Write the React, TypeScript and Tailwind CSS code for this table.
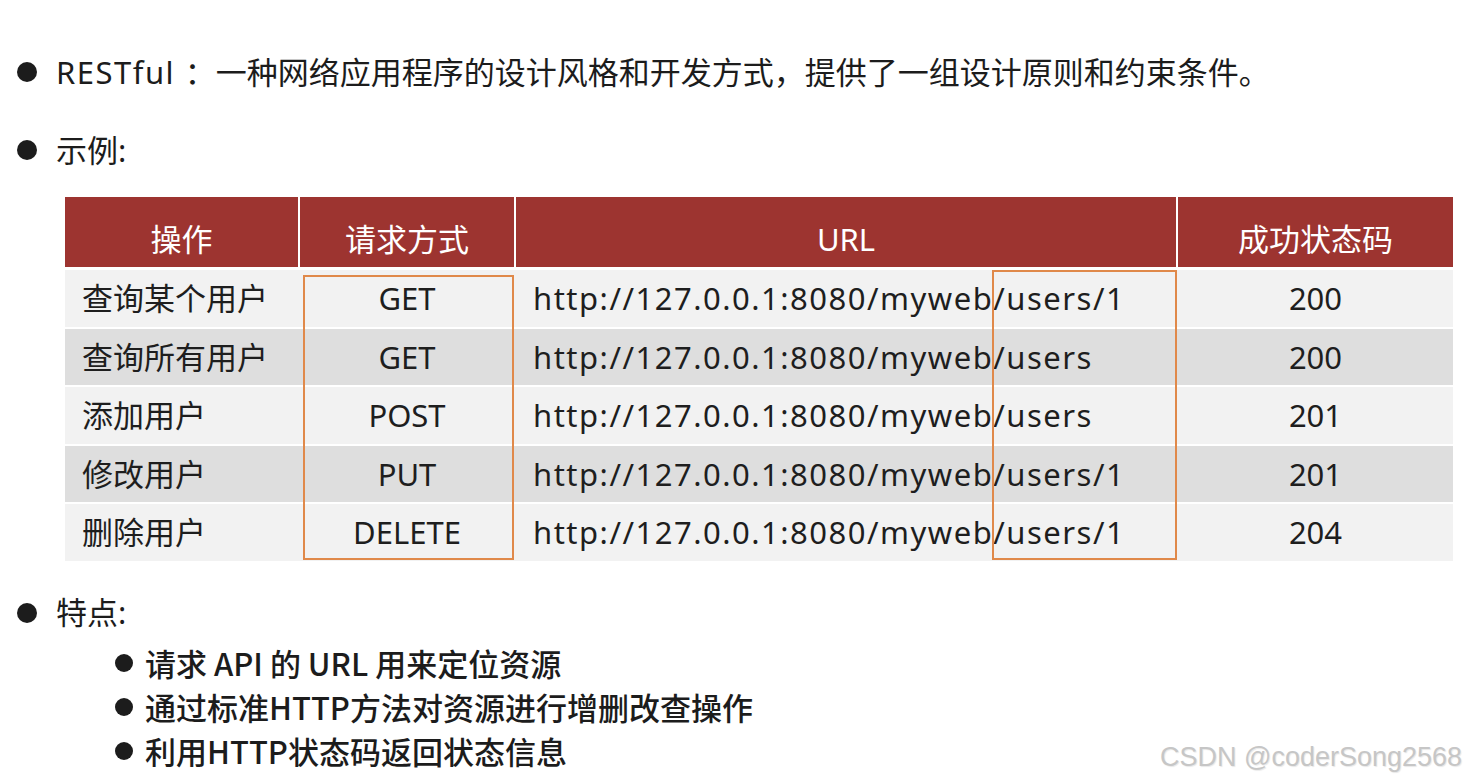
import React from "react";

const rows = [
  { op: "查询某个用户", method: "GET", url: "http://127.0.0.1:8080/myweb/users/1", code: "200" },
  { op: "查询所有用户", method: "GET", url: "http://127.0.0.1:8080/myweb/users", code: "200" },
  { op: "添加用户", method: "POST", url: "http://127.0.0.1:8080/myweb/users", code: "201" },
  { op: "修改用户", method: "PUT", url: "http://127.0.0.1:8080/myweb/users/1", code: "201" },
  { op: "删除用户", method: "DELETE", url: "http://127.0.0.1:8080/myweb/users/1", code: "204" },
];

const features = [
  "请求 API 的 URL 用来定位资源",
  "通过标准HTTP方法对资源进行增删改查操作",
  "利用HTTP状态码返回状态信息",
];

function Bullet({ children }: { children: React.ReactNode }) {
  return (
    <div className="flex items-center h-10 pl-[17px]">
      <span className="w-5 h-5 rounded-full bg-[#1c1c1c] shrink-0" />
      <span className="ml-[19px] text-[31px] leading-none text-[#1c1c1c] whitespace-pre">{children}</span>
    </div>
  );
}

export default function App() {
  return (
    <div
      className="relative w-[1471px] h-[780px] bg-white overflow-hidden"
      style={{ fontFamily: "'Noto Sans', 'Noto Sans CJK SC', sans-serif" }}
    >
      <div className="flex flex-col pt-[52px]">
        <Bullet>
          <span className="tracking-[1.5px]">RESTful </span>：一种网络应用程序的设计风格和开发方式，提供了一组设计原则和约束条件。
        </Bullet>
        <div className="mt-[38px]">
          <Bullet>示例:</Bullet>
        </div>

        {/* table */}
        <div className="relative ml-[65px] mt-[27px] w-[1388px]">
          <div className="grid grid-cols-[233px_214px_660px_275px] gap-x-[2px] h-[70px] bg-white">
            {["操作", "请求方式", "URL", "成功状态码"].map((h) => (
              <div key={h} className="bg-[#9d3430] flex items-center justify-center pt-[14px] text-[31px] text-white">
                {h}
              </div>
            ))}
          </div>
          <div className="flex flex-col gap-[2px] mt-[3px]">
            {rows.map((r, i) => (
              <div
                key={i}
                className={
                  "grid grid-cols-[233px_214px_660px_275px] gap-x-[2px] h-[56.5px] items-center text-[31px] text-[#1e1e1e] " +
                  (i % 2 === 0 ? "bg-[#f2f2f2]" : "bg-[#dedede]")
                }
              >
                <div className="pl-[17px]">{r.op}</div>
                <div className="text-center">{r.method}</div>
                <div className="pl-[17px] tracking-[1.5px]">{r.url}</div>
                <div className="text-center">{r.code}</div>
              </div>
            ))}
          </div>

          {/* highlight boxes */}
          <div className="absolute left-[238px] top-[78px] w-[211px] h-[285px] border-2 border-[#e0894a]" />
          <div className="absolute left-[927px] top-[73px] w-[185px] h-[290px] border-2 border-[#e0894a]" />
        </div>

        <div className="mt-[32px]">
          <Bullet>特点:</Bullet>
        </div>
        <div className="flex flex-col mt-[8px]">
          {features.map((f) => (
            <div key={f} className="flex items-center h-[44px] pl-[115px]">
              <span className="w-[18px] h-[18px] rounded-full bg-[#1c1c1c] shrink-0" />
              <span
                className="ml-[12px] text-[31px] leading-none text-[#1c1c1c] font-medium"
                style={{ fontFamily: "'Noto Sans CJK SC', sans-serif" }}
              >
                {f}
              </span>
            </div>
          ))}
        </div>
      </div>

      <div
        className="absolute left-[1160px] top-[737px] text-[27px] text-[#c6c6c6] [text-shadow:1px_1px_1px_#e8e8e8]"
        style={{ fontFamily: "'Liberation Sans', Arial, sans-serif" }}
      >
        CSDN @coderSong2568
      </div>
    </div>
  );
}
